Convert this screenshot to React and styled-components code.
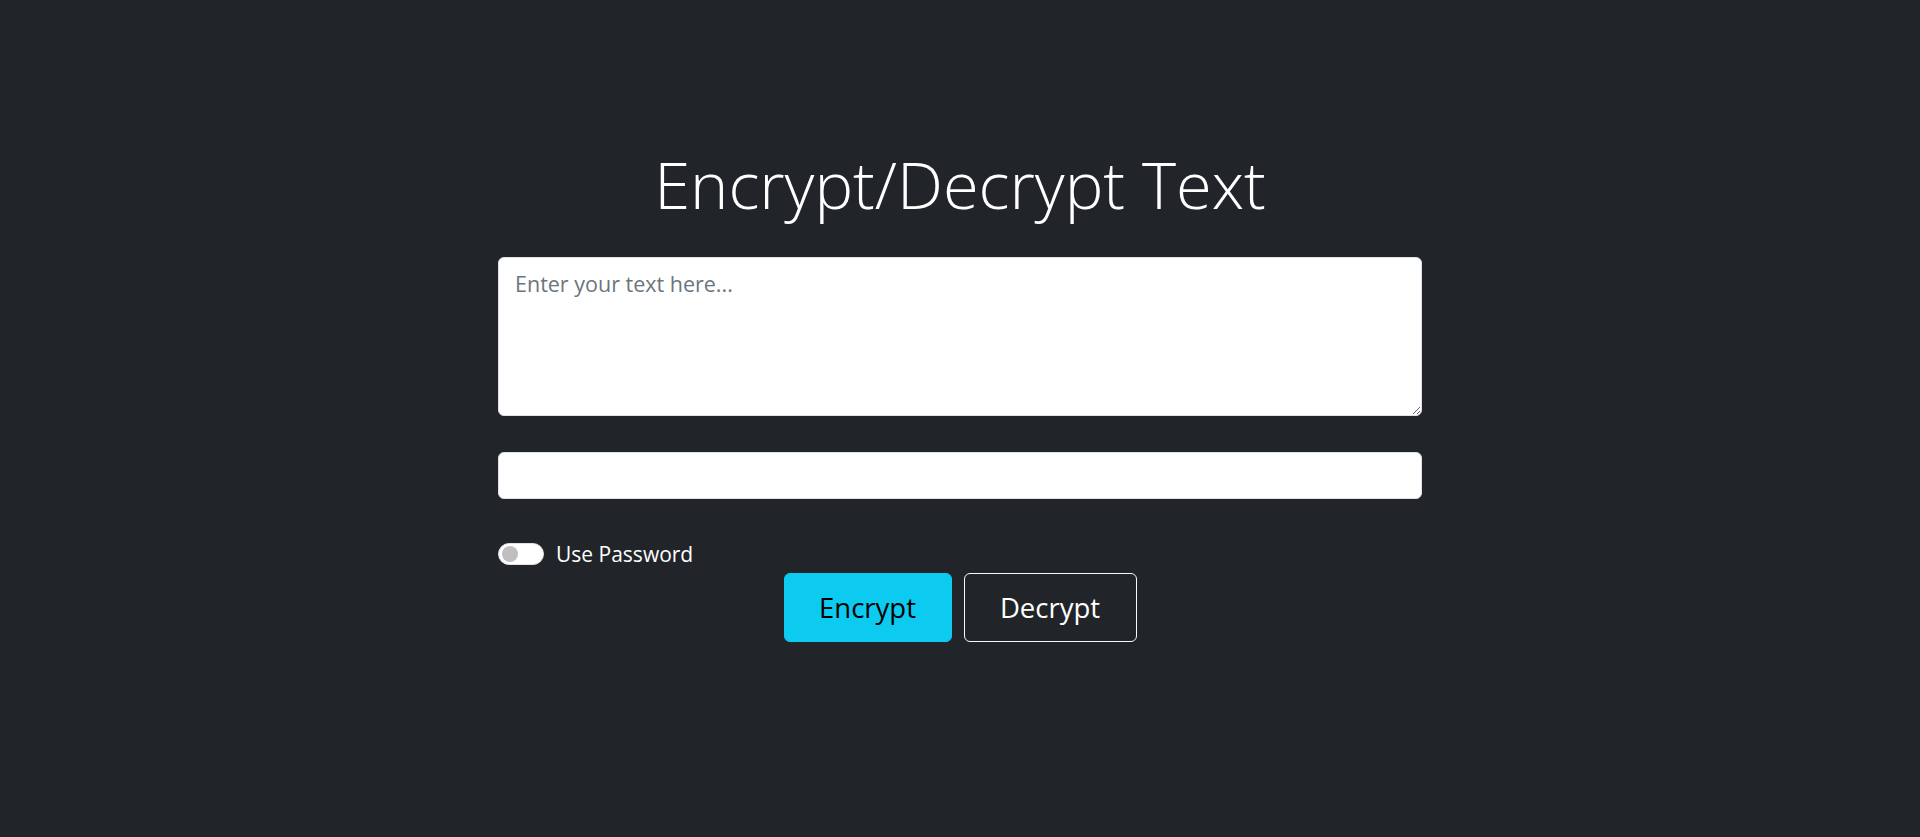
import React from 'react';
import styled, { createGlobalStyle } from 'styled-components';

const GlobalStyle = createGlobalStyle`
  html, body {
    margin: 0;
    padding: 0;
    background: #212529;
    color: #fff;
    font-family: 'Open Sans', 'Noto Sans', sans-serif;
  }
  * {
    box-sizing: border-box;
  }
`;

const Page = styled.main`
  min-height: 837px;
  display: flex;
  justify-content: center;
  padding-top: 141px;
`;

const Panel = styled.div`
  width: 924px;
  display: flex;
  flex-direction: column;
`;

const Title = styled.h1`
  margin: 0 0 30px;
  text-align: center;
  font-size: 65px;
  font-weight: 300;
  line-height: 86px;
  color: #fff;
`;

const TextArea = styled.textarea`
  width: 100%;
  height: 159px;
  padding: 10px 16px;
  font-family: inherit;
  font-size: 21.5px;
  line-height: 1.5;
  color: #212529;
  background: #fff;
  border: 1px solid #dee2e6;
  border-radius: 6px;
  outline: none;
  resize: vertical;
  display: block;

  &::placeholder {
    color: #6c757d;
  }
`;

const TextInput = styled.input`
  margin-top: 36px;
  width: 100%;
  height: 47px;
  padding: 8px 16px;
  font-family: inherit;
  font-size: 21.5px;
  background: #fff;
  border: 1px solid #dee2e6;
  border-radius: 6px;
  outline: none;
  display: block;
`;

const SwitchRow = styled.label`
  margin-top: 42px;
  display: flex;
  align-items: center;
  gap: 12px;
  font-size: 21px;
  line-height: 26px;
  color: #fff;
  cursor: pointer;
`;

const SwitchTrack = styled.span`
  width: 46px;
  height: 22px;
  border-radius: 11px;
  background: #fff;
  border: 1px solid #dee2e6;
  display: flex;
  align-items: center;
  padding-left: 3px;
`;

const SwitchKnob = styled.span`
  width: 16px;
  height: 16px;
  border-radius: 50%;
  background: #bfbfbf;
`;

const Actions = styled.div`
  margin-top: 6px;
  display: flex;
  justify-content: center;
  gap: 12px;
`;

const Button = styled.button`
  height: 69px;
  min-width: ${({ $w }) => $w}px;
  padding: 0 30px;
  font-family: inherit;
  font-size: 27.5px;
  border-radius: 6px;
  cursor: pointer;
  background: ${({ $primary }) => ($primary ? '#0dcaf0' : 'transparent')};
  color: ${({ $primary }) => ($primary ? '#000' : '#fff')};
  border: 1px solid ${({ $primary }) => ($primary ? '#0dcaf0' : '#f8f9fa')};
`;

const App = () => (
  <>
    <GlobalStyle />
    <Page>
      <Panel>
        <Title>Encrypt/Decrypt Text</Title>
        <TextArea placeholder="Enter your text here..." />
        <TextInput type="text" />
        <SwitchRow>
          <SwitchTrack>
            <SwitchKnob />
          </SwitchTrack>
          Use Password
        </SwitchRow>
        <Actions>
          <Button $primary $w={168}>Encrypt</Button>
          <Button $w={173}>Decrypt</Button>
        </Actions>
      </Panel>
    </Page>
  </>
);

export default App;
